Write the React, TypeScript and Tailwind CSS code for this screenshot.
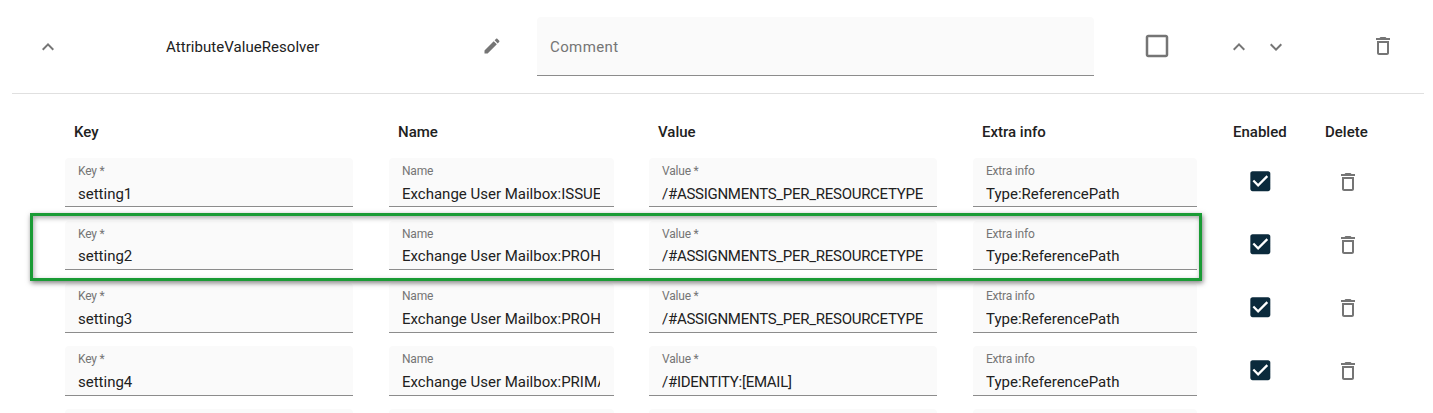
const P = {
  up: "M12 8l-6 6 1.41 1.41L12 10.83l4.59 4.58L18 14z",
  down: "M16.59 8.59L12 13.17 7.41 8.59 6 10l6 6 6-6z",
  edit: "M3 17.25V21h3.75L17.81 9.94l-3.75-3.75L3 17.25zM20.71 7.04c.39-.39.39-1.02 0-1.41l-2.34-2.34c-.39-.39-1.02-.39-1.41 0l-1.83 1.83 3.75 3.75 1.83-1.83z",
  trash: "M6 19c0 1.1.9 2 2 2h8c1.1 0 2-.9 2-2V7H6v12zM8 9h8v10H8V9zm7.5-5l-1-1h-5l-1 1H5v2h14V4h-3.5z",
  blank: "M19 5v14H5V5h14m0-2H5c-1.1 0-2 .9-2 2v14c0 1.1.9 2 2 2h14c1.1 0 2-.9 2-2V5c0-1.1-.9-2-2-2z",
  checked: "M19 3H5c-1.11 0-2 .9-2 2v14c0 1.1.89 2 2 2h14c1.11 0 2-.9 2-2V5c0-1.1-.89-2-2-2zm-9 14l-5-5 1.41-1.41L10 14.17l7.59-7.59L19 8l-9 9z",
};

function Icon({ d, className }: { d: string; className: string }) {
  return (
    <svg viewBox="0 0 24 24" className={className} fill="currentColor">
      <path d={d} />
    </svg>
  );
}

function Field({ label, value, width, tall, low, caps }: { label: string; value: string; width: string; tall: boolean; low: boolean; caps?: boolean }) {
  return (
    <div
      className={`${width} ${tall ? "h-[50px] -mt-px" : "h-[49px]"} shrink-0 rounded-t bg-[#fafafa] border-b border-[#8c8c8c] pl-[13px] pr-[14px] pt-[6px] overflow-hidden`}
    >
      <div className="text-[12px] leading-[14px] text-[#757575] tracking-[-0.2px] whitespace-nowrap">{label}</div>
      <div
        className={`${tall || low ? "mt-[6px]" : "mt-[5px]"} ${caps ? "tracking-[-0.27px]" : ""} text-[15px] leading-[20px] text-[#212121] whitespace-nowrap overflow-hidden`}
      >
        {value}
      </div>
    </div>
  );
}

const rows = [
  ["setting1", "Exchange User Mailbox:ISSUE", "/#ASSIGNMENTS_PER_RESOURCETYPE"],
  ["setting2", "Exchange User Mailbox:PROH", "/#ASSIGNMENTS_PER_RESOURCETYPE"],
  ["setting3", "Exchange User Mailbox:PROH", "/#ASSIGNMENTS_PER_RESOURCETYPE"],
  ["setting4", "Exchange User Mailbox:PRIMA", "/#IDENTITY:[EMAIL]"],
];

function Row({ k, name, value, tall, low }: { k: string; name: string; value: string; tall: boolean; low: boolean }) {
  return (
    <div className="flex items-start h-[63px] pl-[65px]">
      <Field width="w-[288px]" label="Key *" value={k} tall={tall} low={low} />
      <div className="w-[36px] shrink-0" />
      <Field width="w-[225px]" label="Name" value={name} tall={tall} low={low} />
      <div className="w-[35px] shrink-0" />
      <Field width="w-[288px]" label="Value *" value={value} tall={tall} low={low} caps />
      <div className="w-[36px] shrink-0" />
      <Field width="w-[224px]" label="Extra info" value="Type:ReferencePath" tall={tall} low={low} />
      <div className="w-[48px] shrink-0" />
      <div className="w-[30px] shrink-0 flex justify-center pt-[10px]">
        <Icon d={P.checked} className="w-[26.67px] h-[26.67px] text-[#0b2a3c] shrink-0" />
      </div>
      <div className="w-[58px] shrink-0" />
      <div className="w-[30px] shrink-0 flex justify-center pt-[12px]">
        <Icon d={P.trash} className="w-[24px] h-[24px] text-[#757575] shrink-0" />
      </div>
    </div>
  );
}

function EmptyRow() {
  return (
    <div className="flex items-start h-[63px] pl-[65px] -mt-px">
      <div className="w-[288px] h-[50px] shrink-0 rounded-t bg-[#fafafa]" />
      <div className="w-[36px] shrink-0" />
      <div className="w-[225px] h-[50px] shrink-0 rounded-t bg-[#fafafa]" />
      <div className="w-[35px] shrink-0" />
      <div className="w-[288px] h-[50px] shrink-0 rounded-t bg-[#fafafa]" />
      <div className="w-[36px] shrink-0" />
      <div className="w-[224px] h-[50px] shrink-0 rounded-t bg-[#fafafa]" />
    </div>
  );
}

export default function App() {
  return (
    <div
      className="relative w-[1433px] h-[413px] overflow-hidden bg-white text-[#212121]"
      style={{ fontFamily: "Roboto, 'Noto Sans', sans-serif" }}
    >
      <div className="ml-[12px] w-[1412px] h-[94px] border-b border-[#e0e0e0] flex items-start pt-[17px]">
        <div className="w-[24px] ml-[24px] mt-[18px] shrink-0">
          <Icon d={P.up} className="w-[24px] h-[24px] text-[#757575]" />
        </div>
        <div className="ml-[106px] mt-[21px] w-[300px] shrink-0 text-[15px] leading-[18px] tracking-[0.05px] text-[#212121]">AttributeValueResolver</div>
        <Icon d={P.edit} className="w-[20px] h-[20px] ml-[16px] mt-[19px] text-[#757575] shrink-0" />
        <div className="ml-[35px] w-[557px] h-[59px] shrink-0 bg-[#fafafa] border-b border-[#8c8c8c] rounded-t px-[13px] pt-[20px] text-[15px] leading-[20px] tracking-[0.4px] text-[#757575]">
          Comment
        </div>
        <Icon d={P.blank} className="ml-[48px] mt-[14px] w-[30px] h-[30px] text-[#757575] shrink-0" />
        <Icon d={P.up} className="ml-[55px] mt-[18px] w-[24px] h-[24px] text-[#757575] shrink-0" />
        <Icon d={P.down} className="ml-[13px] mt-[18px] w-[24px] h-[24px] text-[#757575] shrink-0" />
        <Icon d={P.trash} className="ml-[83px] mt-[17px] w-[24px] h-[24px] text-[#757575] shrink-0" />
      </div>

      <div className="flex h-[64px] pt-[30px] text-[15px] leading-[16px] font-medium text-[#212121]">
        <div className="ml-[74px] w-[324px]">Key</div>
        <div className="w-[260px]">Name</div>
        <div className="w-[324px]">Value</div>
        <div className="w-[251px]">Extra info</div>
        <div className="w-[92px]">Enabled</div>
        <div>Delete</div>
      </div>

      {rows.map((r, i) => (
        <Row key={r[0]} k={r[0]} name={r[1]} value={r[2]} tall={i >= 2} low={i === 0} />
      ))}
      <EmptyRow />

      <div className="absolute left-[30px] top-[213px] w-[1172px] h-[68px] border-[3px] border-[#1a9b35] shadow-[1px_2px_5px_rgba(0,0,0,0.5),inset_1px_2px_5px_rgba(0,0,0,0.35)]" />
    </div>
  );
}
